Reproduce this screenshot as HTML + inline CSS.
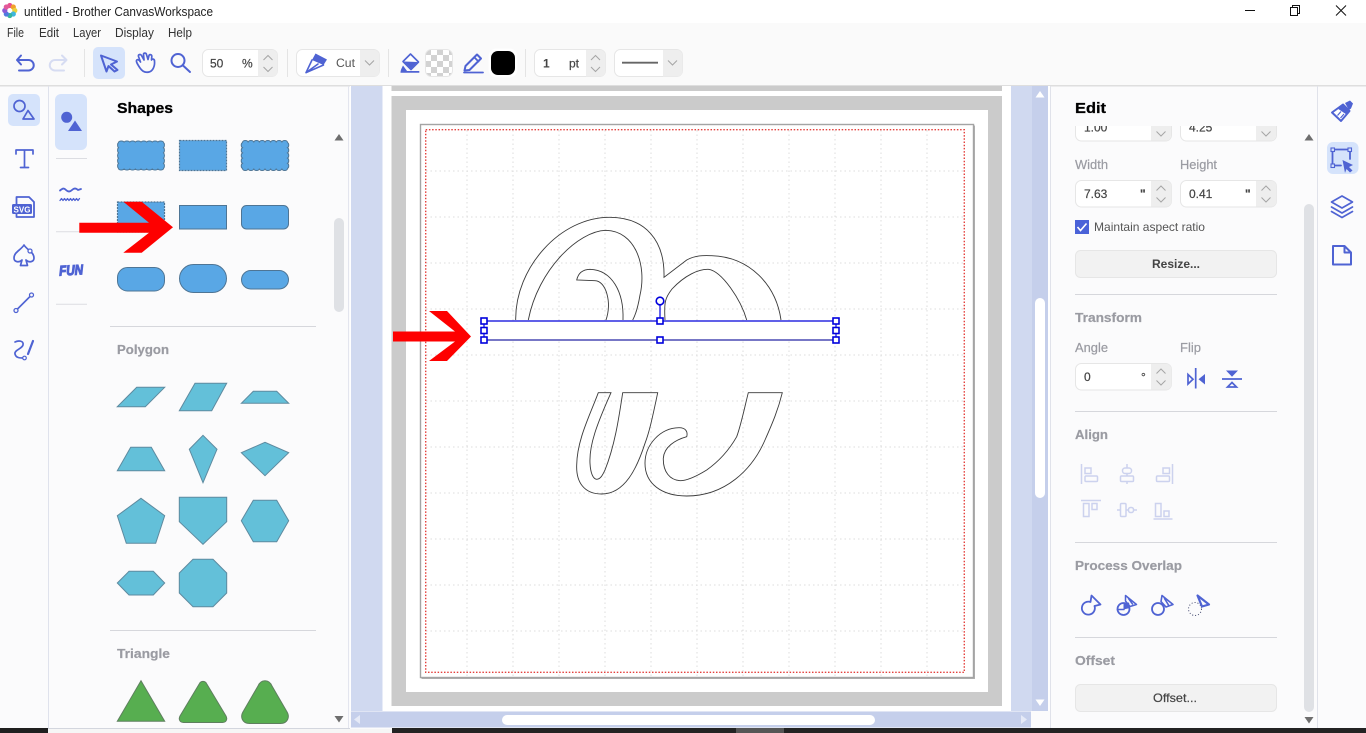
<!DOCTYPE html>
<html lang="en"><head><meta charset="utf-8"><title>untitled - Brother CanvasWorkspace</title>
<style>
html,body{margin:0;padding:0;width:1366px;height:733px;overflow:hidden;background:#fff}
svg{display:block}
text{font-family:"Liberation Sans",sans-serif}
.m{font-size:12px;fill:#333}
.h{font-size:15px;font-weight:bold;fill:#000;stroke:#000;stroke-width:.3}
.s{font-size:13px;font-weight:bold;fill:#9a9ba2;stroke:#9a9ba2;stroke-width:.2}
.l{font-size:12.5px;fill:#9a9ba2;stroke:#9a9ba2;stroke-width:.2}
.v{font-size:12px;fill:#444;stroke:#444;stroke-width:.2}
.b{font-size:12px;font-weight:bold;fill:#444}
.ic{fill:none;stroke:#4f63d3;stroke-width:2;stroke-linejoin:round;stroke-linecap:round}
.f{fill:#4f63d3}
.chev{fill:none;stroke:#a5a5a5;stroke-width:1}
.in{fill:#fff;stroke:#e6e6e6}
.sp{fill:#eeeeee}
.r{fill:#59a7e5;stroke:#4e7595;stroke-width:1}
.d{fill:#59a7e5;stroke:#4e7595;stroke-width:1.2;stroke-dasharray:2 1}
.w{fill:#59a7e5;stroke:#4e7595;stroke-width:1}
.p{fill:#63c0d9;stroke:#5e8a9f;stroke-width:1}
.t{fill:#57ae50;stroke:#5e7f5e;stroke-width:1}
.dv{stroke:#d6d7dc;stroke-width:1}
.al{fill:none;stroke:#ccd2ee;stroke-width:1.5}
.g{fill:none;stroke:#3a3a3a;stroke-width:.9}
.hd{fill:#fff;stroke:#0000dd;stroke-width:1.6}
</style></head><body>
<svg xmlns="http://www.w3.org/2000/svg" width="1366" height="733" viewBox="0 0 1366 733">
<defs>
<pattern id="chk" width="12" height="12" patternUnits="userSpaceOnUse" x="425" y="49">
<rect width="12" height="12" fill="#fff"/><rect width="6" height="6" fill="#d2d2d2"/><rect x="6" y="6" width="6" height="6" fill="#d2d2d2"/>
</pattern>
<clipPath id="edclip"><rect x="1060" y="126" width="240" height="30"/></clipPath>
</defs>

<!-- base -->
<rect width="1366" height="733" fill="#fbfbfc"/>
<rect width="1366" height="23" fill="#fff"/>
<rect y="23" width="1366" height="62" fill="#fafafa"/>
<rect y="85" width="1366" height="1.5" fill="#dedede"/>

<!-- title bar -->
<g>
<circle cx="9.800" cy="5.500" r="2.600" fill="#e8508f"/><circle cx="13.300" cy="7" r="2.600" fill="#f1a12c"/><circle cx="14.800" cy="10.500" r="2.600" fill="#e9d23c"/><circle cx="13.300" cy="14" r="2.600" fill="#3fb6dd"/>
<circle cx="9.800" cy="15.500" r="2.600" fill="#37b4a0"/><circle cx="6.300" cy="14" r="2.600" fill="#4f7be0"/><circle cx="4.800" cy="10.500" r="2.600" fill="#8a5bd6"/><circle cx="6.300" cy="7" r="2.600" fill="#e25a9a"/>
<circle cx="9.800" cy="10.500" r="1.800" fill="#fff"/>
</g>
<text x="24" y="16" class="m" style="fill:#222;font-size:12.5px" textLength="189" lengthAdjust="spacingAndGlyphs">untitled - Brother CanvasWorkspace</text>
<path d="M1245 10.500H1255" stroke="#111" stroke-width="1"/>
<path d="M1290.500 7.500h7v8h-7zM1292.500 7.500v-2h7v8h-2" fill="none" stroke="#111" stroke-width="1"/>
<path d="M1336 5.500l10 10M1346 5.500l-10 10" fill="none" stroke="#111" stroke-width="1"/>

<!-- menu -->
<text x="7" y="37" class="m" style="font-size:12.500px" textLength="17" lengthAdjust="spacingAndGlyphs">File</text>
<text x="39" y="37" class="m" style="font-size:12.500px" textLength="20" lengthAdjust="spacingAndGlyphs">Edit</text>
<text x="73" y="37" class="m" style="font-size:12.500px" textLength="28" lengthAdjust="spacingAndGlyphs">Layer</text>
<text x="115" y="37" class="m" style="font-size:12.500px" textLength="39" lengthAdjust="spacingAndGlyphs">Display</text>
<text x="168" y="37" class="m" style="font-size:12.500px" textLength="24" lengthAdjust="spacingAndGlyphs">Help</text>

<!-- toolbar -->
<path class="ic" d="M21 55.500L17 60L21 64.500M17 60H28.500a5 5 0 0 1 0 10.500H19"/>
<path d="M62 55.500L66.500 60L62 64.500M66.500 60H55a5 5 0 0 0 0 10.500H64" fill="none" stroke="#d6dcf2" stroke-width="2" stroke-linejoin="round" stroke-linecap="round"/>
<path d="M84.500 49V77" stroke="#e4e4e4"/>
<rect x="93" y="47" width="32" height="32" rx="5" fill="#d5e3fb"/>
<path class="ic" d="M101 55.500L117 61.500L111 64.500L117.500 70L114.500 71.500L108.500 66L106.500 71.500Z"/>
<path class="ic" d="M140 68C138 65 136 62 136.500 60.500C137 59 139 59.500 140.500 62L138.500 56.500C138 54.500 140.500 53.800 141.500 55.500L144 60L143.500 54.500C143.500 52.800 146 52.500 146.500 54.500L148 59.500L149 55.500C149.500 54 152 54.500 151.800 56.500L151.500 60C152 58.500 154.500 58.800 154.500 61C155 66 153 71 149 72C145 73 142 71 140 68Z" style="stroke-width:1.700"/>
<circle class="ic" cx="178" cy="60.500" r="6.500"/><path class="ic" d="M183 65.500L190 72"/>
<rect class="in" x="202.500" y="49.500" width="75" height="27" rx="6"/>
<path class="sp" d="M258 50H272a5.500 5.500 0 0 1 5.500 5.500V71a5.500 5.500 0 0 1-5.500 5.500H258Z"/>
<path class="chev" d="M263.500 60l4.500-4.500 4.500 4.500M263.500 67l4.500 4.500 4.500-4.500"/>
<text x="210" y="67.500" class="v">50</text><text x="242" y="67.500" class="v">%</text>
<path d="M287.500 49V77" stroke="#e4e4e4"/>
<rect class="in" x="296.500" y="49.500" width="83" height="27" rx="6"/>
<path class="sp" d="M360 50H374a5.500 5.500 0 0 1 5.500 5.500V71a5.500 5.500 0 0 1-5.500 5.500H360Z"/>
<path class="chev" d="M365 60.500l4.500 4.500 4.500-4.500"/>
<path class="f" d="M315.500 53.500L327 59.500L323.500 65L312 60Z"/>
<path class="ic" d="M312 60L306 72.700L323.500 65M306 72.700L318 64" style="stroke-width:1.600"/>
<text x="336" y="67" class="m" style="fill:#555" textLength="19" lengthAdjust="spacingAndGlyphs">Cut</text>
<path d="M388.500 49V77" stroke="#e4e4e4"/>
<path d="M403 61.500L410.500 54L418.500 62L411 69.500Z" fill="#fff" stroke="#4f63d3" stroke-width="1.600" stroke-linejoin="round"/>
<path class="f" d="M404 61.500L417.500 62L411 68.500Z"/>
<path class="f" d="M400.500 72.700C400.500 70 402 67.500 403 65.500C404.500 67.500 406 69.500 407 71H419.300V72.700Z"/>
<rect x="425.500" y="49.500" width="27" height="27" rx="6" fill="url(#chk)" stroke="#e6e6e6"/>
<path class="ic" d="M464.500 70.500L465.500 66L477 54.500L481 58.500L469.500 70Z"/>
<path class="ic" d="M474.500 57.500L478.500 61.500M464 72.500H483" style="stroke-width:1.800"/>
<rect x="488.500" y="48.500" width="29" height="29" rx="8" fill="#fff"/>
<rect x="491" y="51" width="24" height="24" rx="7" fill="#000"/>
<path d="M525.500 49V77" stroke="#e4e4e4"/>
<rect class="in" x="534.500" y="49.500" width="71" height="27" rx="6"/>
<path class="sp" d="M586 50H600a5.500 5.500 0 0 1 5.500 5.500V71a5.500 5.500 0 0 1-5.500 5.500H586Z"/>
<path class="chev" d="M591 60l4.500-4.500 4.500 4.500M591 67l4.500 4.500 4.500-4.500"/>
<text x="543" y="67.500" class="b">1</text><text x="569" y="67.500" class="b" style="font-weight:normal;stroke:#444;stroke-width:.2">pt</text>
<rect class="in" x="614.500" y="49.500" width="68" height="27" rx="6"/>
<path class="sp" d="M663 50H677a5.500 5.500 0 0 1 5.500 5.500V71a5.500 5.500 0 0 1-5.500 5.500H663Z"/>
<path class="chev" d="M668 60.500l4.500 4.500 4.500-4.500"/>
<path d="M622 62.700H658" stroke="#666" stroke-width="1.800"/>

<!-- left rail -->
<path d="M48.500 86V728" stroke="#dfe2ec"/>
<rect x="8" y="94" width="32" height="32" rx="5" fill="#d5e3fb"/>
<circle class="ic" cx="19.500" cy="106" r="5.500" style="stroke-width:1.700"/>
<path class="ic" d="M28 110.500L23 119H34Z" style="stroke-width:1.700"/>
<path class="ic" d="M16 154v-4H33v4M24.500 150V167M20.500 167.500H28.500" style="stroke-width:1.700"/>
<path class="ic" d="M16.500 197H29L34 202V217H16.500Z" style="stroke-width:1.800"/>
<rect x="12" y="204" width="20" height="10" rx="1.500" class="f"/>
<text x="13.500" y="212.500" style="font-size:8.500px;font-weight:bold;fill:#fff" textLength="17" lengthAdjust="spacingAndGlyphs">SVG</text>
<path class="ic" d="M24 245C21 250 14 252 14 258C14 262 19 263 22 260L20.500 265.500H27.500L26 260C29 263 34 262 34 258C34 252 27 250 24 245Z" style="stroke-width:1.700"/>
<circle cx="30" cy="251" r="2" fill="#fbfbfc" stroke="#4f63d3" stroke-width="1.300"/>
<path class="ic" d="M17.500 309L30 296.500" style="stroke-width:1.600"/>
<circle cx="16" cy="310.500" r="2" fill="#fbfbfc" stroke="#4f63d3" stroke-width="1.300"/>
<circle cx="31.500" cy="295" r="2" fill="#fbfbfc" stroke="#4f63d3" stroke-width="1.300"/>
<path class="ic" d="M15 342C19 340 24 341 23 345C22 349 14 350 15 354C16 358 20 358 23 358" style="stroke-width:1.700"/>
<circle cx="24.500" cy="358" r="1.800" fill="#fbfbfc" stroke="#4f63d3" stroke-width="1.200"/>
<path d="M33 341L28 354" class="ic" style="stroke-width:2.200"/>

<!-- sub rail -->
<rect x="55" y="94" width="32" height="56" rx="6" fill="#d5e3fb"/>
<circle class="f" cx="66.700" cy="117.300" r="5.500"/>
<path class="f" d="M75 120.500L68 131H82Z"/>
<path d="M56 158.500H87M56 231.700H87M56 304.300H87" stroke="#dcdde2"/>
<path class="ic" d="M60 190.500c3-2.500 4-2.500 6-.5s4 2 6 0 4-2 6 0l3-1" style="stroke-width:1.800"/>
<path class="ic" d="M60 200.500l1.500-2 1.500 2 1.500-2 1.500 2 1.500-2 1.500 2 1.500-2 1.500 2 1.500-2 1.500 2 1.500-2 1.500 2 1.500-2" style="stroke-width:1.300"/>
<text x="59" y="275" transform="rotate(-3 70 268)" style="font-size:14px;font-weight:bold;font-style:italic;fill:#4f63d3;stroke:#4f63d3;stroke-width:1.100" textLength="24" lengthAdjust="spacingAndGlyphs">FUN</text>

<!-- shapes panel -->
<text x="117" y="113" class="h" textLength="56" lengthAdjust="spacingAndGlyphs">Shapes</text>
<path class="w" d="M118.500 142.500a2.810 1.500 0 0 1 5.625 0a2.810 1.500 0 0 1 5.625 0a2.810 1.500 0 0 1 5.625 0a2.810 1.500 0 0 1 5.625 0a2.810 1.500 0 0 1 5.625 0a2.810 1.500 0 0 1 5.625 0a2.810 1.500 0 0 1 5.625 0a2.810 1.500 0 0 1 5.625 0a1.500 2.800 0 0 1 0 5.200a1.500 2.800 0 0 1 0 5.200a1.500 2.800 0 0 1 0 5.200a1.500 2.800 0 0 1 0 5.200a1.500 2.800 0 0 1 0 5.200a2.810 1.500 0 0 1 -5.625 0a2.810 1.500 0 0 1 -5.625 0a2.810 1.500 0 0 1 -5.625 0a2.810 1.500 0 0 1 -5.625 0a2.810 1.500 0 0 1 -5.625 0a2.810 1.500 0 0 1 -5.625 0a2.810 1.500 0 0 1 -5.625 0a2.810 1.500 0 0 1 -5.625 0a1.500 2.800 0 0 1 0 -5.200a1.500 2.800 0 0 1 0 -5.200a1.500 2.800 0 0 1 0 -5.200a1.500 2.800 0 0 1 0 -5.200a1.500 2.800 0 0 1 0 -5.200Z"/>
<rect class="d" x="179.500" y="140.500" width="47" height="30"/>
<path class="w" d="M242.500 142.500a2.810 2 0 0 1 5.625 0a2.810 2 0 0 1 5.625 0a2.810 2 0 0 1 5.625 0a2.810 2 0 0 1 5.625 0a2.810 2 0 0 1 5.625 0a2.810 2 0 0 1 5.625 0a2.810 2 0 0 1 5.625 0a2.810 2 0 0 1 5.625 0a2 2.800 0 0 1 0 5.200a2 2.800 0 0 1 0 5.200a2 2.800 0 0 1 0 5.200a2 2.800 0 0 1 0 5.200a2 2.800 0 0 1 0 5.200a2.810 2 0 0 1 -5.625 0a2.810 2 0 0 1 -5.625 0a2.810 2 0 0 1 -5.625 0a2.810 2 0 0 1 -5.625 0a2.810 2 0 0 1 -5.625 0a2.810 2 0 0 1 -5.625 0a2.810 2 0 0 1 -5.625 0a2.810 2 0 0 1 -5.625 0a2 2.800 0 0 1 0 -5.200a2 2.800 0 0 1 0 -5.200a2 2.800 0 0 1 0 -5.200a2 2.800 0 0 1 0 -5.200a2 2.800 0 0 1 0 -5.200Z"/>
<rect class="d" x="117.500" y="202" width="47" height="30"/>
<rect class="r" x="179.500" y="205.500" width="47" height="23.500"/>
<rect class="r" x="241.500" y="205.500" width="47" height="23.500" rx="5"/>
<rect class="r" x="117.500" y="267.500" width="47" height="23.500" rx="10"/>
<rect class="r" x="179.500" y="264.500" width="47" height="28" rx="14"/>
<rect class="r" x="241.500" y="270.500" width="47" height="18.500" rx="9.250"/>
<path class="dv" d="M110 326.500H316M110 630.500H316"/>
<text x="117" y="354" class="s" textLength="52" lengthAdjust="spacingAndGlyphs">Polygon</text>
<polygon class="p" points="117.300,406.700 136.700,387.300 164.700,387.300 145.300,406.700"/>
<polygon class="p" points="179.300,410.700 195,383.300 226.700,383.300 211.700,410.700"/>
<polygon class="p" points="241.300,403.300 253.300,391.300 276.700,391.300 288.700,403.300"/>
<polygon class="p" points="117.300,470.700 130.700,447.300 151.300,447.300 164.700,470.700"/>
<polygon class="p" points="203,435.300 217,449.300 203,482.700 189.300,449.300"/>
<polygon class="p" points="241.300,452.700 265,442.300 288.700,452.700 265,475.700"/>
<polygon class="p" points="141,498.300 164.700,515.700 155.700,543.300 126.300,543.300 117.300,515.700"/>
<polygon class="p" points="179.300,497.300 226.700,497.300 226.700,521.700 203,544.300 179.300,521.700"/>
<polygon class="p" points="241.300,520.700 253.300,500.300 276.700,500.300 288.700,520.700 276.700,541.700 253.300,541.700"/>
<polygon class="p" points="117.300,583 129,571.300 153.300,571.300 164.700,583 153.300,595 129,595"/>
<polygon class="p" points="179.300,573 193,559.300 213,559.300 226.700,573 226.700,593 213,606.700 193,606.700 179.300,593"/>
<text x="117" y="658" class="s" textLength="53" lengthAdjust="spacingAndGlyphs">Triangle</text>
<polygon class="t" points="117.300,721.300 141,680.700 164.700,721.300"/>
<path class="t" d="M199.500 683.500a4 4 0 0 1 7 0L226 716c1.800 3.500 0 6.500-3.500 6.500H183.500c-3.500 0-5.300-3-3.500-6.500Z"/>
<path class="t" d="M258 686c3-7 11-7 14 0L286.500 711c4 6 1 12.500-6 12.500H249.500c-7 0-10-6.500-6-12.500Z"/>
<rect x="334" y="218" width="10" height="94" rx="5" fill="#dfe1e5"/>
<path d="M339 134l4.500 6.500h-9Z" fill="#6e6e6e"/>
<path d="M339 722.500l-4.500-6.500h9Z" fill="#6e6e6e"/>
<path d="M348.500 86V728" stroke="#e3e5ee"/>
<path d="M48 728.500H350" stroke="#d3d6de"/>

<!-- canvas -->
<rect x="350" y="86" width="700" height="625" fill="#fff"/>
<rect x="351" y="86" width="31.500" height="625" fill="#d0d9f0"/>
<rect x="1011" y="86" width="21" height="625" fill="#d0d9f0"/>
<rect x="1032" y="86" width="16" height="625" fill="#c5cfeb"/>
<rect x="391.500" y="86" width="610.500" height="5" fill="#cbcbcb"/>
<rect x="391.500" y="96" width="610.500" height="610" fill="#cbcbcb"/>
<rect x="406" y="110" width="582" height="582" fill="#fff"/>
<rect x="421.500" y="125.500" width="553.500" height="553.500" fill="#b0b0b0"/>
<rect x="420.500" y="124.500" width="553" height="553" fill="#fff" stroke="#a4a4a4" stroke-width="1.400"/>
<path d="M467 130V676M513 130V676M559 130V676M605 130V676M651 130V676M697 130V676M743 130V676M789 130V676M835 130V676M881 130V676M927 130V676M426 171H964M426 217H964M426 263H964M426 309H964M426 355H964M426 401H964M426 447H964M426 493H964M426 539H964M426 585H964M426 631H964" fill="none" stroke="#dcdcdc" stroke-width="1" stroke-dasharray="1.500 3"/>
<rect x="425.700" y="129.700" width="538.600" height="542.600" fill="none" stroke="#e4403c" stroke-width="1.400" stroke-dasharray="1.500 1.700"/>

<!-- glyph -->
<path class="g" d="M515.700 320C515 268 560 217 610 217.300C645 217.500 665 240 664 277.300L686.700 260C696 255 704 255.500 711.700 255.700C750 257 776 285 781 320"/>
<path class="g" d="M528.300 320C538 270 578 231 606 230.300C635 231 647 265 640 295C638 307 636 314 632.700 320"/>
<path class="g" d="M606 320C612 302 606 281 595 280.700L576.700 280C578 274 582 269.500 590 269.300C612 270 624 292 623 320"/>
<path class="g" d="M665 320C664 302 665 298 672 289C685 275 699 269 708.300 269.300C722 271 741 300 746.700 320"/>
<path class="g" d="M598.300 392.700H611C597 424 589 445 590 463.300C590.500 473 593 479 596.700 479.300C601 479 603 474 605 470C615 445 619 417 622.700 392.700H657.700C652 420 649 433 645 443.300C637 468 625 494 601.700 494C584 494 576 482 576.700 465C577 440 590 415 598.300 392.700Z"/>
<path class="g" d="M686.700 436.700C688 432 686 427.700 679 427.700C660 428 645 445 645 463.300C645 484 662 496 686.700 496C725 496 752 470 765 440C773 422 778 410 782.300 392.700H748.300C744 410 741 425 736.700 436.700C728 452 718 462 706.700 470C697 476 687 480.700 680 480.700C670 480 663 472 663.300 458.300C664 447 675 440 686.700 436.700Z"/>

<!-- selection -->
<rect x="484" y="321" width="352" height="19" fill="#fff"/>
<path d="M484 321H836" stroke="#2b2be0" stroke-width="1.400"/>
<path d="M484 340H836" stroke="#4a4ab4" stroke-width="1.400"/>
<path d="M484 321V340M836 321V340M660 305V321" stroke="#0000dd" stroke-width="1.200"/>
<circle class="hd" cx="660" cy="301" r="3.800"/>
<rect class="hd" x="481" y="318" width="6" height="6"/><rect class="hd" x="481" y="327.500" width="6" height="6"/><rect class="hd" x="481" y="337" width="6" height="6"/>
<rect class="hd" x="657" y="318" width="6" height="6"/><rect class="hd" x="657" y="337" width="6" height="6"/>
<rect class="hd" x="833" y="318" width="6" height="6"/><rect class="hd" x="833" y="327.500" width="6" height="6"/><rect class="hd" x="833" y="337" width="6" height="6"/>

<!-- canvas scrollbars -->
<rect x="1035" y="298" width="10" height="200" rx="5" fill="#fff"/>
<path d="M1040 91l4.500 6.500h-9Z" fill="#fff"/>
<path d="M1040 706l-4.500-6.500h9Z" fill="#fff"/>
<rect x="351" y="711.500" width="680" height="16" fill="#c5cfeb"/>
<rect x="502" y="715" width="373" height="10" rx="5" fill="#fff"/>
<path d="M354 719.500l6-4.500v9Z" fill="#e6eaf7"/>
<path d="M1027 719.500l-6-4.500v9Z" fill="#e6eaf7"/>

<!-- right panel -->
<path d="M1050.500 86V728M1317.500 86V728" stroke="#e0e2ea"/>
<text x="1075" y="113" class="h" textLength="31" lengthAdjust="spacingAndGlyphs">Edit</text>
<g clip-path="url(#edclip)">
<rect class="in" x="1075.500" y="115" width="96" height="26" rx="6"/>
<path class="sp" d="M1151 115.500H1171V135a5.500 5.500 0 0 1-5.500 5.500H1151Z"/>
<path class="chev" d="M1156.500 131.500l4.500 4.500 4.500-4.500"/>
<text x="1084" y="131.500" class="v">1.00</text>
<rect class="in" x="1180.500" y="115" width="96" height="26" rx="6"/>
<path class="sp" d="M1256 115.500H1276V135a5.500 5.500 0 0 1-5.500 5.500H1256Z"/>
<path class="chev" d="M1261.500 131.500l4.500 4.500 4.500-4.500"/>
<text x="1189" y="131.500" class="v">4.25</text>
</g>
<text x="1075" y="169" class="l" textLength="33" lengthAdjust="spacingAndGlyphs">Width</text>
<text x="1180" y="169" class="l" textLength="37" lengthAdjust="spacingAndGlyphs">Height</text>
<rect class="in" x="1075.500" y="180.500" width="96" height="26.500" rx="6"/>
<path class="sp" d="M1151 181H1166a5.500 5.500 0 0 1 5.500 5.500V201a5.500 5.500 0 0 1-5.500 5.500H1151Z"/>
<path class="chev" d="M1156.500 190.500l4.500-4.500 4.500 4.500M1156.500 197.500l4.500 4.500 4.500-4.500"/>
<text x="1084" y="198" class="v">7.63</text><text x="1140" y="198" class="v" style="font-weight:bold">"</text>
<rect class="in" x="1180.500" y="180.500" width="96" height="26.500" rx="6"/>
<path class="sp" d="M1256 181H1271a5.500 5.500 0 0 1 5.500 5.500V201a5.500 5.500 0 0 1-5.500 5.500H1256Z"/>
<path class="chev" d="M1261.500 190.500l4.500-4.500 4.500 4.500M1261.500 197.500l4.500 4.500 4.500-4.500"/>
<text x="1189" y="198" class="v">0.41</text><text x="1245" y="198" class="v" style="font-weight:bold">"</text>
<rect x="1075" y="220" width="14" height="14" fill="#4a62d8"/>
<path d="M1077.500 227l3 3.500 6-7" fill="none" stroke="#fff" stroke-width="1.600"/>
<text x="1094" y="231" class="m" style="fill:#555" textLength="111" lengthAdjust="spacingAndGlyphs">Maintain aspect ratio</text>
<rect x="1075.500" y="250.500" width="201" height="27" rx="5" fill="#f2f2f2" stroke="#e6e6e6"/>
<text x="1152" y="268" class="b" textLength="48" lengthAdjust="spacingAndGlyphs">Resize...</text>
<path class="dv" d="M1075 294.500H1277M1075 411.500H1277M1075 542.500H1277M1075 637.500H1277"/>
<text x="1075" y="322" class="s" textLength="67" lengthAdjust="spacingAndGlyphs">Transform</text>
<text x="1075" y="352" class="l" textLength="33" lengthAdjust="spacingAndGlyphs">Angle</text>
<text x="1180" y="352" class="l" textLength="21" lengthAdjust="spacingAndGlyphs">Flip</text>
<rect class="in" x="1075.500" y="363.500" width="96" height="26.500" rx="6"/>
<path class="sp" d="M1151 364H1166a5.500 5.500 0 0 1 5.500 5.500V384a5.500 5.500 0 0 1-5.500 5.500H1151Z"/>
<path class="chev" d="M1156.500 373.500l4.500-4.500 4.500 4.500M1156.500 380.500l4.500 4.500 4.500-4.500"/>
<text x="1084" y="381" class="v">0</text><text x="1141" y="381" class="v">°</text>
<path d="M1195.700 368V388.500" stroke="#4f63d3" stroke-width="1.700"/>
<path d="M1188 374.500V384L1193 379.200Z" fill="none" stroke="#4f63d3" stroke-width="1.700"/>
<path class="f" d="M1205 374V384.500L1198.500 379.200Z"/>
<path d="M1222 379H1242" stroke="#4f63d3" stroke-width="1.700"/>
<path class="f" d="M1226 370.500H1238L1232 376.700Z"/>
<path d="M1232 382.500L1227.500 387H1236.500Z" fill="none" stroke="#4f63d3" stroke-width="1.700"/>
<text x="1075" y="439" class="s" textLength="33" lengthAdjust="spacingAndGlyphs">Align</text>
<g class="al">
<path d="M1081.500 464V484M1127 464V468M1127 473.500V476M1127 481.500V484M1172.500 464V484M1081 500.500H1101M1117 510H1120.500M1126 510H1128.500M1133.500 510H1137M1153.500 519H1172.500"/>
<rect x="1085" y="468" width="6" height="5.500"/><rect x="1085" y="476" width="12.500" height="5.500" rx="1"/>
<rect x="1122.500" y="468" width="9" height="5.500" rx="2.500"/><rect x="1120.500" y="476" width="13" height="5.500" rx="1"/>
<rect x="1163" y="468" width="6.500" height="5.500"/><rect x="1156.500" y="476" width="13" height="5.500" rx="1"/>
<rect x="1083.500" y="503.500" width="5.500" height="13"/><rect x="1092" y="503.500" width="5" height="6"/>
<rect x="1120.500" y="503.500" width="5.500" height="13" rx="1"/><rect x="1128.500" y="507.500" width="5" height="5" rx="2"/>
<rect x="1155.500" y="503.500" width="5.500" height="13"/><rect x="1164" y="511" width="5" height="5.500"/>
</g>
<text x="1075" y="570" class="s" textLength="107" lengthAdjust="spacingAndGlyphs">Process Overlap</text>
<path class="ic" d="M1090.500 602L1091.500 595.500L1100.500 604.500L1094.500 606A6.500 6.500 0 1 1 1090.500 602Z" style="stroke-width:1.800"/>
<circle class="ic" cx="1123.500" cy="609" r="6" style="stroke-width:1.800"/>
<path class="f" d="M1123.500 603.500L1129 602.500L1130 608L1123.500 609.500Z"/>
<path class="ic" d="M1125.500 595.500L1136.500 604.500L1130 606.500L1125.500 601ZM1117.500 609.500H1124M1128.500 598.500L1132.500 604" style="stroke-width:1.500"/>
<circle class="ic" cx="1158" cy="609" r="6" style="stroke-width:1.800"/>
<path class="ic" d="M1162 595.500L1173 604.500L1166 607L1161 601.500ZM1164.500 598.500L1168.500 605" style="stroke-width:1.600"/>
<circle cx="1195" cy="609" r="6.500" fill="none" stroke="#444a70" stroke-width="1" stroke-dasharray="1 2"/>
<path class="ic" d="M1197.500 595.500L1209 604.500L1202 606.500Z" style="stroke-width:2.200"/>
<text x="1075" y="665" class="s" textLength="40" lengthAdjust="spacingAndGlyphs">Offset</text>
<rect x="1075.500" y="684.500" width="201" height="27" rx="5" fill="#f2f2f2" stroke="#e6e6e6"/>
<text x="1153" y="702" class="m" style="fill:#444;stroke:#444;stroke-width:.2" textLength="44" lengthAdjust="spacingAndGlyphs">Offset...</text>
<rect x="1304" y="204" width="10" height="508" rx="5" fill="#dfe1e5"/>
<path d="M1309 134l4.500 6.500h-9Z" fill="#6e6e6e"/>
<path d="M1309 723.500l-4.500-6.500h9Z" fill="#6e6e6e"/>

<!-- right rail -->
<path class="f" d="M1345 103L1350 100.500L1353 103.500L1351 108.500L1349 110Z"/>
<path d="M1343 104.500L1349.500 111L1341 121L1332 112.500Z" fill="#fff" stroke="#4f63d3" stroke-width="2" stroke-linejoin="round"/>
<path class="f" d="M1343 104.500L1349.500 111L1346.500 114.500L1337.500 108.500Z"/>
<path d="M1337.500 115.500L1341 111.500M1340.500 118L1344 114" stroke="#4f63d3" stroke-width="1.200"/>
<rect x="1327" y="142" width="31.500" height="32" rx="6" fill="#d5e3fb"/>
<path class="ic" d="M1332.500 149.500V165.500H1341M1332.500 149.500H1350V159" style="stroke-width:1.800"/>
<rect x="1331" y="148" width="3.500" height="3.500" fill="#d5e3fb" stroke="#4f63d3" stroke-width="1.100"/>
<rect x="1348" y="148" width="3.500" height="3.500" fill="#d5e3fb" stroke="#4f63d3" stroke-width="1.100"/>
<rect x="1331" y="164" width="3.500" height="3.500" fill="#d5e3fb" stroke="#4f63d3" stroke-width="1.100"/>
<path class="f" d="M1342.500 160L1353 165L1349 167L1352.500 170.500L1350 172.500L1346.500 169L1345 173Z"/>
<path class="ic" d="M1342 196L1352.500 202L1342 208L1331.500 202Z" style="stroke-width:1.700"/>
<path class="ic" d="M1331.500 207L1342 213L1352.500 207M1331.500 211.500L1342 217.500L1352.500 211.500" style="stroke-width:1.700"/>
<path class="ic" d="M1333 246H1344.500L1351 252.500V264.500H1333ZM1344.500 246V252.500H1351" style="stroke-width:2"/>

<!-- red arrows -->
<polygon fill="#fe0000" points="79.300,222.700 149,222.700 123.300,201.700 141.700,201.700 173,227.300 141.700,252.700 123.300,252.700 149,232.700 79.300,232.700"/>
<polygon fill="#fe0000" points="393,331.500 455,331.500 429,311 447,311 471,336.500 447,361 429,361 455,341.500 393,341.500"/>

<!-- bottom strip -->
<rect x="0" y="728" width="48" height="5" fill="#1f1f1f"/>
<rect x="48" y="729" width="344" height="4" fill="#f6f6f6"/>
<rect x="392" y="728" width="974" height="5" fill="#232323"/>
<rect x="736" y="728" width="48" height="5" fill="#565656"/>
</svg>
</body></html>
